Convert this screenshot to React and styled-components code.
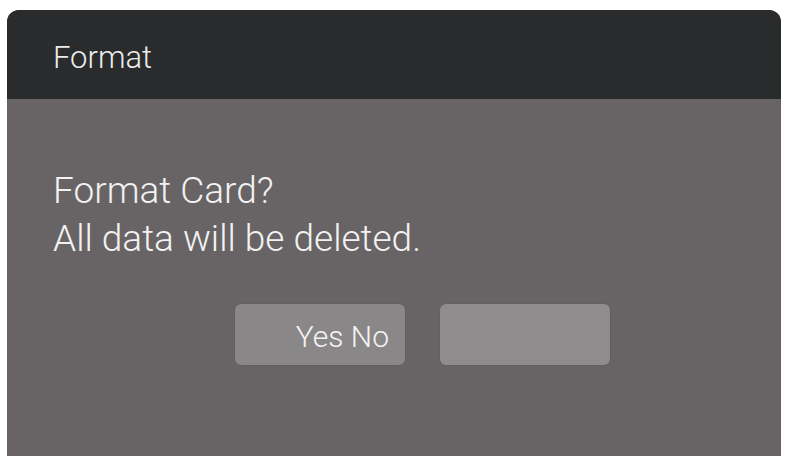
import styled, { createGlobalStyle } from "styled-components";

const Global = createGlobalStyle`
  html, body {
    margin: 0;
    padding: 0;
    background: #ffffff;
  }
  body {
    font-family: Roboto, "Liberation Sans", sans-serif;
  }
`;

const Page = styled.div`
  width: 787px;
  height: 456px;
  padding: 10px 6px 0 7px;
  box-sizing: border-box;
  overflow: hidden;
`;

const Dialog = styled.div`
  height: 100%;
  display: flex;
  flex-direction: column;
  border-radius: 12px 12px 0 0;
  overflow: hidden;
  background: #686465;
`;

const Header = styled.div`
  height: 89px;
  flex-shrink: 0;
  display: flex;
  align-items: center;
  box-sizing: border-box;
  padding: 6px 0 0 46px;
  background: #2a2b2d;
  color: #ececec;
  font-size: 31px;
  font-weight: 300;
`;

const Body = styled.div`
  flex: 1;
  display: flex;
  flex-direction: column;
  padding: 68px 0 0 46px;
`;

const Message = styled.p`
  margin: 0;
  color: #f2f2f2;
  font-size: 37px;
  font-weight: 300;
  line-height: 48px;
`;

const Buttons = styled.div`
  display: flex;
  gap: 35px;
  margin: 41px 0 0 182px;
`;

const Button = styled.button`
  width: 170px;
  height: 61px;
  border: none;
  border-radius: 6px;
  background: ${(p) => (p.$blank ? "#8f8c8d" : "#8a8788")};
  color: #f4f4f4;
  font-family: Roboto, "Liberation Sans", sans-serif;
  font-size: 30px;
  font-weight: 300;
  text-align: right;
  padding: 4px 16px 0 0;
  box-shadow: 0 0 2px rgba(0, 0, 0, 0.15);
`;

export default function App() {
  return (
    <>
      <Global />
      <Page>
        <Dialog>
          <Header>Format</Header>
          <Body>
            <Message>
              Format Card?
              <br />
              All data will be deleted.
            </Message>
            <Buttons>
              <Button>Yes No</Button>
              <Button $blank />
            </Buttons>
          </Body>
        </Dialog>
      </Page>
    </>
  );
}
